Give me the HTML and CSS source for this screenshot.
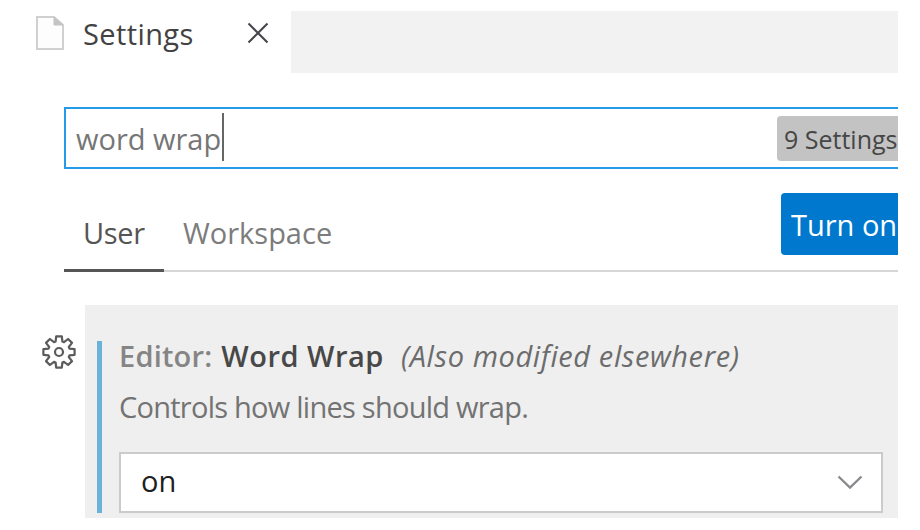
FILE: index.html
```
<!DOCTYPE html>
<html lang="en">
<head>
<meta charset="utf-8">
<title>Settings</title>
<link rel="stylesheet" href="styles.css">
</head>
<body>
<main class="window">
  <header class="tabs">
    <div class="tab">
      <svg class="file" width="28" height="34" viewBox="0 0 28 34"><path d="M1 1H18L27 9V33H1Z" fill="#fdfdfd" stroke="#d0d0d0" stroke-width="2"/><path d="M18 1V9H27Z" fill="#c4c4c4" stroke="#c4c4c4"/></svg>
      <span class="tab-name">Settings</span>
      <svg class="close" width="22" height="22" viewBox="0 0 22 22"><path d="M1.5 1.5L20.5 20.5M20.5 1.5L1.5 20.5" stroke="#48454c" stroke-width="2.1"/></svg>
    </div>
  </header>
  <div class="search">
    <span class="query">word wrap</span><span class="caret"></span>
    <span class="count">9 Settings</span>
  </div>
  <nav class="scopes">
    <span class="scope active">User</span>
    <span class="scope">Workspace</span>
    <span class="sync">Turn on</span>
  </nav>
  <section class="row">
    <svg class="gear" width="34" height="34" viewBox="-17 -17 34 34" fill="none" stroke="#5b5b5b" stroke-width="2.2" stroke-linejoin="round"><path d="M-3.4 -10.5 L-2.8 -15.6 H2.8 L3.4 -10.5 L5 -9.8 L9.1 -13 L13 -9.1 L9.8 -5 L10.5 -3.4 L15.6 -2.8 V2.8 L10.5 3.4 L9.8 5 L13 9.1 L9.1 13 L5 9.8 L3.4 10.5 L2.8 15.6 H-2.8 L-3.4 10.5 L-5 9.8 L-9.1 13 L-13 9.1 L-9.8 5 L-10.5 3.4 L-15.6 2.8 V-2.8 L-10.5 -3.4 L-9.8 -5 L-13 -9.1 L-9.1 -13 L-5 -9.8Z"/><circle r="4"/></svg>
    <div class="panel">
      <div class="setting">
        <div class="title"><span class="category">Editor:</span><span class="name">Word Wrap</span><span class="note">(Also modified elsewhere)</span></div>
        <div class="description">Controls how lines should wrap.</div>
        <div class="select">
          <span class="value">on</span>
          <svg width="26" height="15" viewBox="0 0 26 15"><path d="M1.5 1.5L13 12.5L24.5 1.5" fill="none" stroke="#8a8a8e" stroke-width="2.4"/></svg>
        </div>
      </div>
    </div>
  </section>
</main>
</body>
</html>
```
FILE: styles.css
```
* { box-sizing: border-box; }
body {
  margin: 0;
  background: #fff;
  font-family: "Open Sans", "Noto Sans", sans-serif;
  font-size: 29px;
  line-height: 40px;
  color: #6c6c6c;
  white-space: nowrap;
}
svg { display: block; flex: none; }
.window {
  width: 898px;
  height: 507px;
  margin-top: 11px;
  overflow: hidden;
  display: flow-root;
}
.tabs { height: 62px; background: #f2f2f2; }
.tab {
  width: 291px;
  height: 62px;
  padding: 0 22px 0 36px;
  background: #fff;
  display: flex;
  align-items: flex-start;
}
.file { margin-top: 5px; }
.tab-name { margin: 3px 0 0 19px; color: #424242; letter-spacing: 0.4px; }
.close { margin: 11px 0 0 auto; }
.search {
  height: 62px;
  margin: 34px 0 0 64px;
  border: 2px solid #259ae9;
  border-right: 0;
  padding: 7px 0 0 10px;
  display: flex;
  align-items: flex-start;
}
.query { margin-top: 3px; color: #767676; }
.caret { width: 2px; height: 48px; margin-top: -3px; margin-left: 1px; background: #666; }
.count {
  width: 121px;
  height: 45px;
  margin-left: auto;
  padding: 3px 0 0 7px;
  border-radius: 4px 0 0 4px;
  background: #c3c3c3;
  color: #464646;
  font-size: 25px;
}
.scopes {
  height: 79px;
  margin: 24px 0 0 64px;
  border-bottom: 2px solid #d6d6d6;
  display: flex;
  align-items: flex-start;
}
.scope { height: 79px; padding: 20px 19px 0; color: #7c7c7c; }
.active { width: 100px; border-bottom: 3px solid #555; color: #555; letter-spacing: -0.3px; }
.sync {
  width: 117px;
  height: 62px;
  margin-left: auto;
  padding: 12px 0 0 10px;
  border-radius: 4px 0 0 4px;
  background: #0078ce;
  color: #fff;
}
.row { display: flex; margin-top: 33px; }
.gear { margin: 30px 9px 0 42px; }
.panel { flex: 1; height: 213px; background: #efefef; padding: 36px 15px 0 12px; }
.setting { height: 172px; border-left: 5px solid #6bb2d9; padding-left: 17px; }
.title { display: flex; height: 50px; line-height: 30px; }
.category { font-weight: 600; color: #858585; letter-spacing: 0.2px; }
.name { font-weight: 600; color: #484848; margin-left: 9px; letter-spacing: 0.5px; }
.note { font-style: italic; margin-left: 17px; letter-spacing: 0.6px; }
.description { height: 61px; line-height: 31px; color: #737373; letter-spacing: -0.75px; }
.select {
  height: 61px;
  border: 2px solid #cbcbcb;
  background: #fff;
  display: flex;
  justify-content: space-between;
  align-items: center;
  padding: 0 18px 0 20px;
}
.value { color: #202020; margin-top: -4px; }
```
